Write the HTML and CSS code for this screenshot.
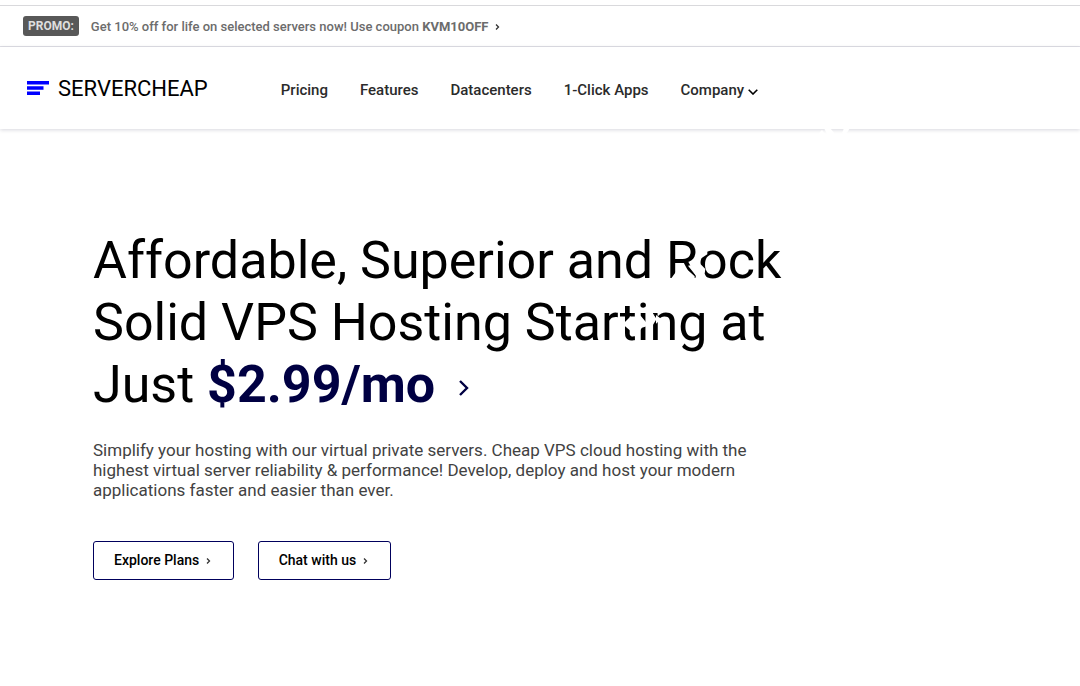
FILE: index.html
```html
<!doctype html>
<html lang="en">
  <head>
    <meta charset="UTF-8" />
    <meta name="viewport" content="width=device-width, initial-scale=1.0" />
    <title>ServerCheap - Affordable VPS Hosting</title>
    <link rel="stylesheet" href="styles.css">
  </head>
  <body>
    <div class="top-strip"></div>
    <div class="promo-bar">
      <span class="promo-tag">PROMO:</span>
      <a href="#pricing" class="promo-link">Get 10% off for life on selected servers now! Use coupon <b>KVM10OFF</b>
        <svg class="chevron-sm" viewBox="0 0 5 6"><path d="M1 .5 3.500 3 1 5.500" /></svg>
      </a>
    </div>

    <header class="site-header">
      <a href="#" class="brand">
        <svg class="brand-mark" viewBox="0 0 22 14"><path d="M0 0h22v3.500H0zM0 5.300h16.500v3.500H0zM0 10.500h13v3.500H0z" /></svg>
        <span>SERVERCHEAP</span>
      </a>
      <nav class="main-nav">
        <a href="#pricing">Pricing</a>
        <a href="#features">Features</a>
        <a href="#datacenters">Datacenters</a>
        <a href="#apps">1-Click Apps</a>
        <a href="#company">Company <svg class="caret" viewBox="0 0 10 6"><path d="M.7 .7 5 5 9.300 .7" /></svg></a>
      </nav>
      <svg class="spark spark-header" viewBox="0 0 36 8"><path d="M0 8 6 2l5 6zM8 0h6l7 8h-9zM25 8l3-8h6l-5 8z" /></svg>
    </header>

    <main class="hero">
      <h1>Affordable, Superior and Rock Solid VPS Hosting Starting at Just
        <a href="#pricing" class="price">$2.99/mo <svg class="price-arrow" viewBox="0 0 11 18"><path d="M2 2l7 7-7 7" /></svg></a>
        <svg class="spark spark-top" viewBox="0 0 210 150">
          <path d="M28 138 48 110 62 86 104 124 104 138Z" />
          <path d="M84 92 108 88 116 72 122 88 136 102 134 116 140 128 128 140 104 136 108 122Z" />
          <path d="M112 70 132 42 142 42 142 58 124 70Z" />
        </svg>
        <svg class="spark spark-bottom" viewBox="0 0 210 165">
          <path d="M38 88 62 64 68 86 62 108Z" />
          <path d="M86 44 110 36 110 42 90 52Z" />
          <path d="M84 62 92 62 110 84 110 94 96 98 90 106 84 96Z" />
          <path d="M118 50 130 58 140 72 130 88 118 98Z" />
          <path d="M138 60 154 72 138 86Z" />
        </svg>
      </h1>
      <p>Simplify your hosting with our virtual private servers. Cheap VPS cloud hosting with the highest virtual server reliability &amp; performance! Develop, deploy and host your modern applications faster and easier than ever.</p>
      <div class="actions">
        <button type="button">Explore Plans <svg class="chevron-sm" viewBox="0 0 5 6"><path d="M1 .5 3.500 3 1 5.500" /></svg></button>
        <button type="button">Chat with us <svg class="chevron-sm" viewBox="0 0 5 6"><path d="M1 .5 3.500 3 1 5.500" /></svg></button>
      </div>
    </main>
  </body>
</html>
```
FILE: styles.css
```css
:root {
  --navy: #000042;
  --text: #2b2b2b;
  --border: #dfdfe6;
}
body { margin: 0; background: #fff; color: var(--text); font-family: Roboto, sans-serif; }
a { color: inherit; text-decoration: none; }
svg path { fill: none; stroke: currentColor; }

.top-strip { height: 5px; border-bottom: 1px solid #d9d9dc; }
.promo-bar { display: flex; align-items: center; gap: 12px; height: 40px; padding: 0 23px; border-bottom: 1px solid var(--border); font-size: 13px; font-weight: 500; color: #6c6c6c; }
.promo-tag { padding: 0 5px; border-radius: 3px; background: #585858; color: #dedede; font-size: 12px; line-height: 20px; font-weight: 700; }
.promo-link b { font-weight: 700; }
.chevron-sm { width: 5px; height: 6px; margin: 0 0 1px 3px; color: #333; }
.chevron-sm path { stroke-width: 1.3; }

.site-header { position: relative; display: flex; align-items: center; height: 82px; padding: 0 27px; box-shadow: 0 1px 4px rgba(0, 0, 50, 0.16); }
.brand { display: flex; align-items: center; gap: 9px; color: #000; font-size: 22px; }
.brand-mark { width: 22px; height: 14px; }
.brand-mark path { fill: #00f; stroke: none; }
.main-nav { display: flex; gap: 32px; margin-left: 73px; padding-top: 4px; font-size: 15px; font-weight: 500; }
.caret { width: 10px; height: 6px; color: #000; }
.caret path { stroke-width: 1.6; }

.spark { position: absolute; }
.spark path { fill: #fff; stroke: none; }
.spark-header { left: 816px; bottom: -7px; width: 36px; height: 8px; }
.spark-top { left: 567px; top: 5px; width: 70px; height: 50px; }
.spark-bottom { left: 517px; top: 65px; width: 70px; height: 55px; }

.hero { max-width: 700px; padding: 101px 93px; }
h1 { position: relative; margin: 0; color: #000; font-size: 52px; line-height: 62px; font-weight: 400; }
.price { color: var(--navy); font-weight: 700; }
.price-arrow { width: 11px; height: 18px; margin-left: 10px; vertical-align: 5px; }
.price-arrow path { stroke-width: 2.4; }
.hero p { margin: 24px 0 41px; color: #424242; font-size: 17px; line-height: 20px; }
.actions { display: flex; gap: 24px; }
.actions button { padding: 0 22px 2px 20px; height: 39px; border: 1px solid #00005c; border-radius: 3px; background: #fff; color: #000; font: 500 14px Roboto, sans-serif; cursor: pointer; }
```
